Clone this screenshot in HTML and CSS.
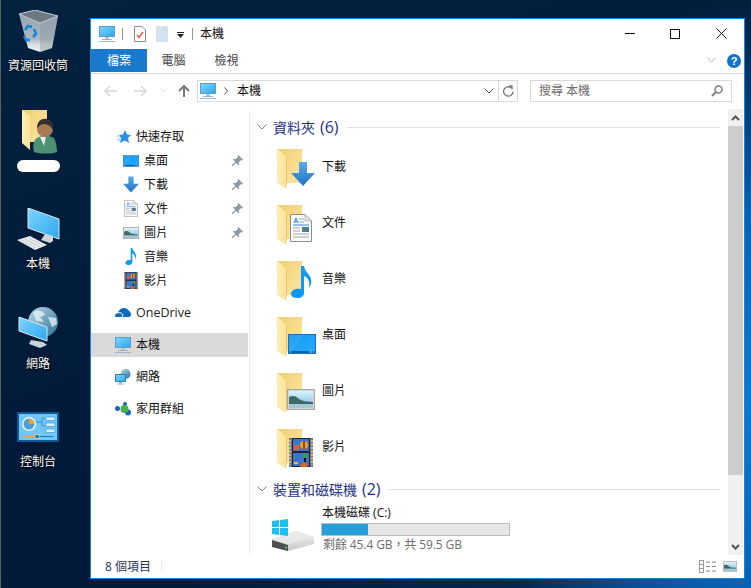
FILE: index.html
```html
<!DOCTYPE html>
<html lang="zh-Hant">
<head>
<meta charset="utf-8">
<title>本機</title>
<link rel="stylesheet" href="styles.css">
</head>
<body>
<svg class="sprite" aria-hidden="true">
  <defs>
    <linearGradient id="gBack" x1="0" y1="0" x2="1" y2="1"><stop offset="0" stop-color="#f3cf73"/><stop offset="1" stop-color="#fbe6a4"/></linearGradient>
    <linearGradient id="gFlap" x1="0" y1="0" x2="1" y2="0"><stop offset="0" stop-color="#ffeeb5"/><stop offset="1" stop-color="#fde29a"/></linearGradient>
    <linearGradient id="gArrow" x1="0" y1="0" x2="0" y2="1"><stop offset="0" stop-color="#57abea"/><stop offset="1" stop-color="#1f72c6"/></linearGradient>
    <linearGradient id="gScreen" x1="0" y1="0" x2="1" y2="1"><stop offset="0" stop-color="#7fd6fb"/><stop offset="1" stop-color="#2ba7f2"/></linearGradient>
    <linearGradient id="gDesk" x1="0" y1="0" x2="1" y2="1"><stop offset="0" stop-color="#1597f0"/><stop offset="1" stop-color="#24aeff"/></linearGradient>
    <linearGradient id="gSky" x1="0" y1="0" x2="0" y2="1"><stop offset="0" stop-color="#d8f2fb"/><stop offset=".55" stop-color="#a6d2ee"/><stop offset="1" stop-color="#7fb0d0"/></linearGradient>
    <linearGradient id="gBin" x1="0" y1="0" x2="0" y2="1"><stop offset="0" stop-color="#98a6b0"/><stop offset=".65" stop-color="#a9b6bf"/><stop offset=".8" stop-color="#d7dee2"/><stop offset="1" stop-color="#eef1f3"/></linearGradient>
    <linearGradient id="gGlobe" x1="0" y1="0" x2="1" y2="1"><stop offset="0" stop-color="#b7dcec"/><stop offset="1" stop-color="#2c6d90"/></linearGradient>
    <linearGradient id="gDrive" x1="0" y1="0" x2="0" y2="1"><stop offset="0" stop-color="#f2f2f2"/><stop offset="1" stop-color="#c9c9c9"/></linearGradient>

    <symbol id="folder" viewBox="0 0 26 41">
      <polygon points="0,0 25,0 25,34 9,34" fill="url(#gBack)"/>
      <polygon points="0,0 9,7 9,40 0,34" fill="url(#gFlap)"/>
      <polygon points="9,7 9,40 10,34 10,8" fill="#e7c56d"/>
    </symbol>
    <symbol id="arrow" viewBox="0 0 24 24">
      <polygon points="8,0 16,0 16,11 24,11 12,24 0,11 8,11" fill="url(#gArrow)"/>
    </symbol>
    <symbol id="doc" viewBox="0 0 22 28">
      <polygon points=".5,.5 15,.5 21.5,7 21.5,27.5 .5,27.5" fill="#fbfbfb" stroke="#8d8d8d"/>
      <polygon points="15,.5 15,7 21.5,7" fill="#dfe3e6" stroke="#a9a9a9" stroke-width=".6"/>
      <path d="M4 9l2-5 2 5M4.800 7.600h2.400" fill="none" stroke="#2f86d6"/>
      <path d="M9 5h5M9 8h5" stroke="#7cb2e2"/>
      <path d="M3 11h16" stroke="#2f86d6"/>
      <rect x="12" y="13" width="7" height="5" fill="#4b7f94"/>
      <path d="M3 14h7M3 17h7M3 20h16M3 23h16" stroke="#a5a5a5"/>
    </symbol>
    <symbol id="note" viewBox="0 0 21 32">
      <path d="M10 0h3c.5 4 3 6 5 9 3 4 3 9 0 13 .8-4 .5-7-1.500-9.500-1-1.200-2-2-3.500-2.500V27c0 3-3 5-6.500 5S0 30.500 0 28c0-3.500 4-6 10-5z" fill="#0e9af0"/>
    </symbol>
    <symbol id="screen" viewBox="0 0 28 20">
      <rect x=".5" y=".5" width="27" height="19" fill="url(#gDesk)" stroke="#1275b8"/>
      <polygon points="1,1 16,1 3,19 1,19" fill="#fff" opacity=".08"/>
      <rect x="1" y="17" width="26" height="2" fill="#0e63a8"/>
      <path d="M2 18h1M21 18h1M23 18h1M25 18h1" stroke="#fff"/>
    </symbol>
    <symbol id="pic" viewBox="0 0 28 21">
      <rect x=".75" y=".75" width="26.500" height="19.500" fill="#fff" stroke="#a8a8a8" stroke-width="1.500"/>
      <rect x="2" y="2" width="24" height="17" fill="url(#gSky)"/>
      <path d="M2 8c4-2 7-1 10 2 3 2 8 3 14 3v2H2z" fill="#3d6a68"/>
      <rect x="2" y="15" width="24" height="4" fill="#a9c6d4"/>
    </symbol>
    <symbol id="film" viewBox="0 0 24 29">
      <rect width="24" height="29" fill="#777"/>
      <rect x="3" width="18" height="29" fill="#24242c"/>
      <path d="M1 2v25M23 2v25" stroke="#e0d8b8" stroke-width="1.500" stroke-dasharray="2 1.500"/>
      <rect x="4" y="1" width="16" height="12" fill="#3f74cc"/>
      <rect x="4" y="15" width="16" height="13" fill="#3f74cc"/>
      <circle cx="15" cy="7" r="4" fill="#e0a81c"/><rect x="14" y="3" width="2" height="8" fill="#b3361f"/>
      <rect x="5" y="7" width="5" height="5" fill="#d8604a"/>
      <circle cx="16" cy="18" r="2.500" fill="#3f9c4f"/>
      <rect x="15" y="20" width="2" height="4" fill="#111"/>
      <circle cx="15" cy="28" r="3.500" fill="#d8661c"/>
      <rect x="5" y="24" width="4" height="2" fill="#e0c040"/>
    </symbol>
    <symbol id="pc" viewBox="0 0 16 16">
      <rect x=".5" y=".5" width="15" height="10" fill="url(#gScreen)" stroke="#5f9fc4"/>
      <rect x="6" y="11" width="4" height="2" fill="#b8c6d0"/>
      <rect x="3" y="13" width="10" height="1" fill="#9fb2c0"/>
      <rect y="15" width="16" height="1" fill="#9fb6c8"/>
    </symbol>
    <symbol id="star" viewBox="0 0 14 13">
      <polygon points="8,0 10,4.500 14,5 11,8 12,13 7.500,10.500 3,13 4,8 2,5 6,4.500" fill="#2b8fe0"/>
      <path d="M0 6h3M0 9h3M1 11h2" stroke="#8ec8f2"/>
    </symbol>
    <symbol id="onedrive" viewBox="0 0 16 11">
      <path d="M0 9c0-2 1.500-3 3-3 .5-3 3-5 6-5 2 0 4 1 5 3 1.500.5 2 2 2 3.500 0 2-1.500 2.500-2.500 2.500H2C1 10 0 10 0 9z" fill="#0f6cbd"/>
      <path d="M3 6c2-1 4 0 5 2l-1 2" fill="none" stroke="#fff"/>
    </symbol>
    <symbol id="net" viewBox="0 0 16 16">
      <circle cx="10.500" cy="5" r="5" fill="url(#gGlobe)"/>
      <rect x=".5" y="5.500" width="10" height="7" fill="url(#gScreen)" stroke="#2f7fb0"/>
      <rect x="4" y="13" width="3" height="1.500" fill="#9fb2c0"/>
      <rect x="2" y="14.500" width="7" height="1" fill="#9fb2c0"/>
    </symbol>
    <symbol id="home" viewBox="0 0 16 14">
      <circle cx="2.500" cy="6.500" r="2.500" fill="#1e66b5"/>
      <circle cx="10" cy="2" r="2" fill="#1e66b5"/>
      <circle cx="13" cy="10.500" r="3" fill="#1e66b5"/>
      <circle cx="9.500" cy="7" r="4" fill="#45b04a"/>
    </symbol>
    <symbol id="pin" viewBox="0 0 12 12">
      <path d="M7 0l5 5-1 1-1-.5-2.500 2.500.5 2-1 1-2.500-2.500L1 12l-1 0 0-1 3.500-3.500L1 5l1-1 2 .5L6.500 2 6 1z" fill="#8f9aa3"/>
    </symbol>
    <symbol id="chev" viewBox="0 0 10 6">
      <path d="M.5.500L5 5l4.500-4.500" fill="none" stroke="currentColor"/>
    </symbol>
  </defs>
</svg>

<div class="desktop">
  <div class="desk-icon desk-bin">
    <svg class="bin-art" viewBox="0 0 40 43">
      <polygon points="0,4 21,13 39,6 33,38 21,42 9,38" fill="url(#gBin)"/>
      <polygon points="21,13 39,6 33,38 21,42" fill="#8d9aa4" opacity=".45"/>
      <polygon points="0,4 16,0 39,6 21,13" fill="#6c7882" stroke="#c6cfd5"/>
      <g fill="none" stroke="#1584e0" stroke-width="2.600">
        <path d="M6 20l3-4 4 1"/><path d="M15 19l2 5-3 3"/><path d="M11 30H7l-2-4"/>
      </g>
    </svg>
    <span class="desk-label">資源回收筒</span>
  </div>
  <div class="desk-icon desk-user">
    <svg class="user-art" viewBox="0 0 36 44">
      <polygon points="0,0 25,0 25,32 8,32" fill="url(#gBack)"/>
      <polygon points="0,0 8,6 8,40 0,33" fill="url(#gFlap)"/>
      <path d="M12 42c-2-8 0-14 7-16l6-1 7 3c2 4 3 10 3 14-6 2-17 2-23 0z" fill="#4c9272"/>
      <polygon points="18,27 24,26 22,36" fill="#e9efe9"/>
      <circle cx="23" cy="19" r="8" fill="#a67b52"/>
      <path d="M15 18c0-7 5-10 10-9 5 1 7 5 6 11-2-4-5-6-9-6-3 0-5 2-7 4z" fill="#33302f"/>
    </svg>
    <span class="redacted"></span>
  </div>
  <div class="desk-icon desk-pc">
    <svg class="pc-art" viewBox="0 0 44 42">
      <polygon points="12,0 43,11 43,31 12,20" fill="url(#gScreen)" stroke="#d9e6ee"/>
      <polygon points="29,26 37,28 37,33 34,35 25,32" fill="#cfd6da"/>
      <polygon points="1,32 14,28 31,37 19,42" fill="#e8ecee"/>
      <path d="M5 32l15 8M9 31l15 8M13 30l15 8" stroke="#b6bec4" stroke-width=".7"/>
    </svg>
    <span class="desk-label">本機</span>
  </div>
  <div class="desk-icon desk-net">
    <svg class="net-art" viewBox="0 0 40 42">
      <circle cx="25" cy="15" r="15" fill="url(#gGlobe)"/>
      <path d="M15 5c6-3 11 0 12 3l-5 2 4 5-8-1zM30 10l8 1 1 6-5 3z" fill="#e9f4f8" opacity=".75"/>
      <polygon points="1,10 29,20 29,34 1,24" fill="url(#gScreen)" stroke="#dce8ef"/>
      <polygon points="13,33 25,35 29,38 22,41 11,37" fill="#c9d2d8"/>
    </svg>
    <span class="desk-label">網路</span>
  </div>
  <div class="desk-icon desk-cp">
    <svg class="cp-art" viewBox="0 0 42 30">
      <rect width="42" height="30" fill="#0d5c98"/>
      <rect x="2" y="2" width="38" height="26" fill="#72c6f6"/>
      <circle cx="12" cy="12" r="7" fill="#e9f6fd"/>
      <circle cx="12" cy="12" r="5.500" fill="#4d9fd8"/>
      <path d="M12 12V6.500a5.500 5.500 0 0 1 5.500 5.500z" fill="#f4a11e"/>
      <path d="M19 10h6V6h3M25 10v4h3" fill="none" stroke="#2f8fd0"/>
      <rect x="29" y="5" width="9" height="3.500" fill="#d8f0fc" stroke="#2f8fd0" stroke-width=".6"/>
      <rect x="29" y="11" width="9" height="3.500" fill="#d8f0fc" stroke="#2f8fd0" stroke-width=".6"/>
      <rect x="29" y="17" width="9" height="3.500" fill="#d8f0fc" stroke="#2f8fd0" stroke-width=".6"/>
      <path d="M6 24.500h13" stroke="#f4a11e"/><path d="M20 24.500h16" stroke="#1577c4"/>
      <rect x="18" y="22.500" width="4" height="4" fill="#1577c4" stroke="#d8f0fc" stroke-width=".6"/>
    </svg>
    <span class="desk-label">控制台</span>
  </div>

  <div class="window">
    <header class="titlebar">
      <svg class="qa-pc"><use href="#pc"/></svg>
      <span class="qa-sep"></span>
      <svg class="qa-doc" viewBox="0 0 12 16">
        <polygon points=".5,.5 8,.5 11.500,4 11.500,15.500 .5,15.500" fill="#fcfcfc" stroke="#8a8a8a"/>
        <path d="M3 9l2 2.500L9 6" fill="none" stroke="#e0552a" stroke-width="1.300"/>
      </svg>
      <svg class="qa-blank" viewBox="0 0 12 16">
        <rect width="12" height="16" fill="#d3e3f0"/><path d="M8 1v3h3" fill="none" stroke="#b8cfe0"/>
      </svg>
      <svg class="qa-drop" viewBox="0 0 7 6">
        <rect width="7" height="1" fill="#222"/><polygon points="0,2 7,2 3.500,6" fill="#222"/>
      </svg>
      <span class="qa-sep qa-sep-2"></span>
      <span class="title-text">本機</span>
      <div class="win-controls">
        <span class="ctl ctl-min"></span>
        <span class="ctl ctl-max"></span>
        <svg class="ctl-close" viewBox="0 0 11 11"><path d="M.5.500l10 10M10.500.500l-10 10" stroke="#111"/></svg>
      </div>
    </header>

    <nav class="tabs">
      <span class="tab tab-file">檔案</span>
      <span class="tab">電腦</span>
      <span class="tab">檢視</span>
      <svg class="ribbon-chev"><use href="#chev"/></svg>
      <span class="help">?</span>
    </nav>

    <div class="navbar">
      <svg class="nav-back" viewBox="0 0 13 12"><path d="M13 6H1M6 1L1 6l5 5" fill="none" stroke="#d6d6d6" stroke-width="1.500"/></svg>
      <svg class="nav-fwd" viewBox="0 0 13 12"><path d="M0 6h12M7 1l5 5-5 5" fill="none" stroke="#d6d6d6" stroke-width="1.500"/></svg>
      <svg class="nav-recent"><use href="#chev"/></svg>
      <svg class="nav-up" viewBox="0 0 12 12"><path d="M6 12V1M1 6l5-5 5 5" fill="none" stroke="#7a7a7a" stroke-width="2"/></svg>
      <div class="address">
        <svg class="addr-pc"><use href="#pc"/></svg>
        <svg class="addr-sep" viewBox="0 0 4 8"><path d="M.5.500L3.500 4 .5 7.500" fill="none" stroke="#555"/></svg>
        <span class="addr-text">本機</span>
        <svg class="addr-drop"><use href="#chev"/></svg>
        <span class="addr-div"></span>
        <svg class="addr-refresh" viewBox="0 0 12 12"><path d="M9.500 3A4.700 4.700 0 1 0 11 6.500" fill="none" stroke="#777" stroke-width="1.300"/><path d="M7 1l3 0 0 3.500" fill="none" stroke="#777" stroke-width="1.300"/></svg>
      </div>
      <div class="search">
        <span class="search-text">搜尋 本機</span>
        <svg class="search-icon" viewBox="0 0 12 12"><circle cx="7.500" cy="4.500" r="3.500" fill="none" stroke="#7f7f7f" stroke-width="1.500"/><path d="M5 7l-4 4" stroke="#7f7f7f" stroke-width="2"/></svg>
      </div>
    </div>

    <div class="main">
      <aside class="sidebar">
        <div class="side-group">
          <div class="side-row side-top"><svg class="si-star"><use href="#star"/></svg><span>快速存取</span></div>
          <div class="side-row side-sub"><svg class="si-sub si-screen"><use href="#screen"/></svg><span class="side-name">桌面</span><svg class="pin"><use href="#pin"/></svg></div>
          <div class="side-row side-sub"><svg class="si-sub si-arrow"><use href="#arrow"/></svg><span class="side-name">下載</span><svg class="pin"><use href="#pin"/></svg></div>
          <div class="side-row side-sub"><svg class="si-sub si-doc"><use href="#doc"/></svg><span class="side-name">文件</span><svg class="pin"><use href="#pin"/></svg></div>
          <div class="side-row side-sub"><svg class="si-sub si-pic"><use href="#pic"/></svg><span class="side-name">圖片</span><svg class="pin"><use href="#pin"/></svg></div>
          <div class="side-row side-sub"><svg class="si-sub si-note"><use href="#note"/></svg><span class="side-name">音樂</span></div>
          <div class="side-row side-sub"><svg class="si-sub si-film"><use href="#film"/></svg><span class="side-name">影片</span></div>
        </div>
        <div class="side-row side-root"><svg class="si-root si-od"><use href="#onedrive"/></svg><span class="latin-name">OneDrive</span></div>
        <div class="side-row side-root side-active"><svg class="si-root"><use href="#pc"/></svg><span>本機</span></div>
        <div class="side-row side-root"><svg class="si-root"><use href="#net"/></svg><span>網路</span></div>
        <div class="side-row side-root"><svg class="si-root si-home"><use href="#home"/></svg><span>家用群組</span></div>
      </aside>

      <section class="content">
        <div class="group-head"><svg class="group-chev"><use href="#chev"/></svg><span>資料夾<span class="group-count">(6)</span></span><span class="group-line"></span></div>
        <div class="folder-row"><div class="ficon"><svg class="fbase"><use href="#folder"/></svg><svg class="fover ov-arrow"><use href="#arrow"/></svg></div><span class="flabel">下載</span></div>
        <div class="folder-row"><div class="ficon"><svg class="fbase"><use href="#folder"/></svg><svg class="fover ov-doc"><use href="#doc"/></svg></div><span class="flabel">文件</span></div>
        <div class="folder-row"><div class="ficon"><svg class="fbase"><use href="#folder"/></svg><svg class="fover ov-note"><use href="#note"/></svg></div><span class="flabel">音樂</span></div>
        <div class="folder-row"><div class="ficon"><svg class="fbase"><use href="#folder"/></svg><svg class="fover ov-screen"><use href="#screen"/></svg></div><span class="flabel">桌面</span></div>
        <div class="folder-row"><div class="ficon"><svg class="fbase"><use href="#folder"/></svg><svg class="fover ov-pic"><use href="#pic"/></svg></div><span class="flabel">圖片</span></div>
        <div class="folder-row"><div class="ficon"><svg class="fbase"><use href="#folder"/></svg><svg class="fover ov-film"><use href="#film"/></svg></div><span class="flabel">影片</span></div>
        <div class="group-head group-head-2"><svg class="group-chev"><use href="#chev"/></svg><span>裝置和磁碟機<span class="group-count">(2)</span></span><span class="group-line"></span></div>
        <div class="drive">
          <svg class="drive-icon" viewBox="0 0 42 32">
            <polygon points="0,20 24,12 42,18 42,25 16,32 0,28" fill="url(#gDrive)"/>
            <polygon points="0,20 24,12 42,18 16,25" fill="#e9e9e9"/>
            <polygon points="0,21 16,26 16,32 0,28" fill="#4f4f4f"/>
            <rect x="13" y="27.500" width="2" height="2" fill="#3fce5a"/>
            <path d="M0 2l7-1v7H0zM8 1l8-1v8H8zM0 9h7v7l-7-1zM8 9h8v8l-8-1z" fill="#1ec0f0"/>
          </svg>
          <div class="drive-info">
            <div class="drive-name">本機磁碟 (C:)</div>
            <div class="drive-bar"><div class="drive-fill"></div></div>
            <div class="drive-free">剩餘 45.4 GB，共 59.5 GB</div>
          </div>
        </div>
      </section>

      <div class="scrollbar">
        <svg class="sb-arrow" viewBox="0 0 9 6"><path d="M1 5l3.500-3.500L8 5" fill="none" stroke="#555" stroke-width="2"/></svg>
        <div class="sb-thumb"></div>
        <div class="sb-track"></div>
        <svg class="sb-arrow" viewBox="0 0 9 6"><path d="M1 1l3.500 3.500L8 1" fill="none" stroke="#555" stroke-width="2"/></svg>
      </div>
    </div>

    <footer class="statusbar">
      <span class="status-text">8 個項目</span>
      <span class="status-sep"></span>
      <svg class="view-details" viewBox="0 0 17 13">
        <rect x=".5" y=".5" width="4" height="12" fill="#fff" stroke="#999"/><path d="M1 4.500h3M1 8.500h3" stroke="#999"/>
        <path d="M7 2h4M13 2h4M7 6.500h4M13 6.500h4M7 11h4M13 11h4" stroke="#888"/>
      </svg>
      <svg class="view-thumb"><use href="#pic"/></svg>
    </footer>
  </div>
</div>
</body>
</html>
```

FILE: styles.css
```css
* { box-sizing: border-box; }
html, body { margin: 0; padding: 0; }
body {
  font: 12px/16px "Open Sans", "Noto Sans CJK TC", sans-serif;
  color: #111;
  overflow: hidden;
}
svg { display: block; flex: none; }
.sprite { position: absolute; width: 0; height: 0; }

.desktop {
  position: relative;
  width: 751px;
  height: 588px;
  overflow: hidden;
  border-left: 1px solid #5a5f66;
  background:
    radial-gradient(ellipse 260px 400px at 100% 68%, #0f78d0 0, #0a62b4 45%, rgba(8, 60, 120, 0) 100%),
    linear-gradient(160deg, #02223f 0, #021b3a 50%, #021a3a 75%, #05305f 100%);
}

/* desktop icons: free canvas */
.desk-icon {
  position: absolute;
  left: -1px;
  width: 76px;
  display: flex;
  flex-direction: column;
  align-items: center;
}
.desk-label {
  color: #fff;
  text-shadow: 0 1px 2px #000, 0 0 2px #000;
  line-height: 16px;
}
.desk-bin { top: 10px; }
.bin-art { width: 40px; height: 43px; margin-bottom: 5px; margin-left: 1px; }
.desk-user { top: 110px; }
.user-art { width: 36px; height: 44px; margin-left: 3px; }
.redacted {
  width: 43px;
  height: 12px;
  margin-top: 6px;
  margin-left: 1px;
  background: #fff;
  border-radius: 6px;
}
.desk-pc { top: 208px; }
.pc-art { width: 44px; height: 42px; margin-bottom: 6px; }
.desk-net { top: 307px; }
.net-art { width: 40px; height: 42px; margin-bottom: 7px; }
.desk-cp { top: 412px; }
.cp-art { width: 42px; height: 30px; margin-bottom: 12px; }

/* window */
.window {
  position: absolute;
  left: 89px;
  top: 18px;
  width: 655px;
  height: 561px;
  background: #fff;
  border: 1px solid #1585dc;
  display: flex;
  flex-direction: column;
}

.titlebar {
  flex: none;
  height: 30px;
  display: flex;
  align-items: center;
  padding-left: 8px;
}
.qa-pc { width: 16px; height: 16px; }
.qa-sep { width: 1px; height: 12px; background: #999; margin-left: 7px; }
.qa-doc { width: 12px; height: 16px; margin-left: 11px; }
.qa-blank { width: 12px; height: 16px; margin-left: 10px; }
.qa-drop { width: 7px; height: 6px; margin-left: 9px; margin-top: 1px; }
.qa-sep-2 { margin-left: 8px; }
.title-text { margin-left: 7px; line-height: 16px; }
.win-controls {
  margin-left: auto;
  display: flex;
  align-items: center;
  padding-right: 17px;
}
.ctl-min { width: 10px; height: 1px; background: #111; margin-top: -1px; }
.ctl-max { width: 10px; height: 10px; border: 1px solid #111; margin-left: 35px; margin-top: -1px; }
.ctl-close { width: 11px; height: 11px; margin-left: 36px; margin-top: -1px; }

.tabs {
  flex: none;
  height: 25px;
  display: flex;
  align-items: flex-start;
  border-bottom: 1px solid #dadada;
}
.tab {
  width: 53px;
  height: 23px;
  line-height: 23px;
  text-align: center;
  color: #444;
}
.tab-file { width: 56px; background: #1979ca; color: #fff; }
.ribbon-chev {
  width: 9px;
  height: 6px;
  margin: 8px 0 0 auto;
  color: #aaa;
}
.help {
  width: 14px;
  height: 14px;
  margin: 5px 3px 0 11px;
  border-radius: 50%;
  background: #0f74c8;
  color: #fff;
  font: bold 11px/14px "Liberation Sans", sans-serif;
  text-align: center;
}

.navbar {
  flex: none;
  height: 36px;
  display: flex;
  align-items: flex-start;
  padding-top: 6px;
}
.nav-back { width: 13px; height: 12px; margin: 5px 0 0 13px; }
.nav-fwd { width: 13px; height: 12px; margin: 5px 0 0 17px; }
.nav-recent { width: 7px; height: 5px; margin: 8px 0 0 13px; color: #d0d0d0; }
.nav-up { width: 12px; height: 12px; margin: 5px 0 0 11px; }
.address {
  width: 321px;
  height: 22px;
  margin-left: 7px;
  border: 1px solid #d9d9d9;
  display: flex;
  align-items: center;
  padding-left: 2px;
}
.addr-pc { width: 16px; height: 16px; }
.addr-sep { width: 4px; height: 8px; margin-left: 8px; }
.addr-text { margin-left: 9px; line-height: 16px; }
.addr-drop { width: 10px; height: 6px; margin-left: auto; color: #555; }
.addr-div { width: 1px; height: 20px; background: #d9d9d9; margin-left: 4px; }
.addr-refresh { width: 12px; height: 12px; margin: 0 3px 0 3px; }
.search {
  width: 202px;
  height: 22px;
  margin-left: 12px;
  border: 1px solid #d9d9d9;
  display: flex;
  align-items: center;
  padding: 0 8px 0 8px;
}
.search-text { color: #6d6d6d; line-height: 16px; }
.search-icon { width: 12px; height: 12px; margin-left: auto; }

.main { flex: 1; min-height: 0; display: flex; }

.sidebar {
  flex: none;
  width: 159px;
  padding-top: 15px;
  border-right: 1px solid #eeeeee;
  display: flex;
  flex-direction: column;
  gap: 8px;
}
.side-row { height: 24px; display: flex; align-items: center; padding-bottom: 1px; }
.side-top { padding-left: 26px; }
.si-star { width: 14px; height: 13px; margin-right: 5px; }
.side-sub { padding-left: 32px; padding-right: 5px; }
.si-sub { width: 16px; height: 16px; margin-right: 5px; }
.si-screen { height: 12px; }
.si-arrow { height: 17px; }
.si-doc { height: 17px; }
.si-pic { height: 12px; }
.si-note { height: 17px; }
.si-film { height: 17px; }
.pin { width: 11px; height: 11px; margin-left: auto; margin-right: 1px; }
.side-root { padding-left: 24px; margin-right: 1px; }
.si-root { width: 16px; height: 16px; margin-right: 5px; }
.si-od { height: 11px; margin-right: 5px; }
.si-home { height: 14px; }
.side-active { background: #d9d9d9; }
.latin-name { font-size: 12.500px; color: #222; }

.content { flex: 1; min-width: 0; overflow: hidden; padding-top: 7px; }
.group-head {
  height: 20px;
  display: flex;
  align-items: center;
  padding-left: 7px;
  padding-right: 8px;
  color: #1e3287;
  font-size: 14px;
  line-height: 20px;
  margin-bottom: 4px;
}
.group-head-2 { margin-top: 2px; margin-bottom: 0; }
.group-chev { width: 10px; height: 6px; margin-right: 6px; color: #808080; }
.group-count { font-size: 16px; margin-left: 5px; }
.group-line { flex: 1; height: 1px; background: #e3e3e3; margin-left: 7px; }

.folder-row { height: 56px; display: flex; align-items: center; padding-left: 27px; }
.ficon { position: relative; width: 46px; height: 41px; margin-top: 1px; flex: none; }
.fbase { width: 26px; height: 41px; }
.fover { position: absolute; }
.ov-arrow { left: 14px; top: 13px; width: 24px; height: 24px; }
.ov-doc { left: 13px; top: 9px; width: 22px; height: 28px; }
.ov-note { left: 14px; top: 5px; width: 21px; height: 32px; }
.ov-screen { left: 11px; top: 17px; width: 28px; height: 20px; }
.ov-pic { left: 10px; top: 16px; width: 28px; height: 21px; }
.ov-film { left: 12px; top: 9px; width: 24px; height: 29px; }
.flabel { padding-bottom: 4px; margin-left: -1px; line-height: 16px; }

.drive { display: flex; padding-left: 22px; }
.drive-icon { width: 42px; height: 32px; margin-top: 20px; margin-right: 9px; }
.drive-info { padding-top: 6px; }
.drive-name { line-height: 16px; margin-left: -1px; }
.drive-bar {
  width: 189px;
  height: 13px;
  margin: 2px 0 1px -2px;
  border: 1px solid #bcbcbc;
  background: #e6e6e6;
}
.drive-fill { width: 24.500%; height: 100%; background: #26a0da; }
.drive-free { color: #6d6d6d; line-height: 16px; white-space: nowrap; letter-spacing: -.1px; }

.scrollbar {
  flex: none;
  width: 15px;
  margin-right: 1px;
  margin-top: -1px;
  display: flex;
  flex-direction: column;
  background: #f0f0f0;
}
.sb-arrow { width: 9px; height: 6px; margin: 6px auto 5px; }
.sb-thumb { height: 349px; background: #cdcdcd; }
.sb-track { flex: 1; }

.statusbar {
  flex: none;
  height: 23px;
  display: flex;
  align-items: center;
  padding-left: 14px;
  padding-right: 7px;
}
.status-text { color: #2a3558; line-height: 16px; }
.status-sep { width: 1px; height: 12px; background: #eaeaea; margin-left: 10px; }
.view-details { width: 17px; height: 13px; margin-left: auto; }
.view-thumb { width: 14px; height: 13px; margin-left: 7px; }
```
